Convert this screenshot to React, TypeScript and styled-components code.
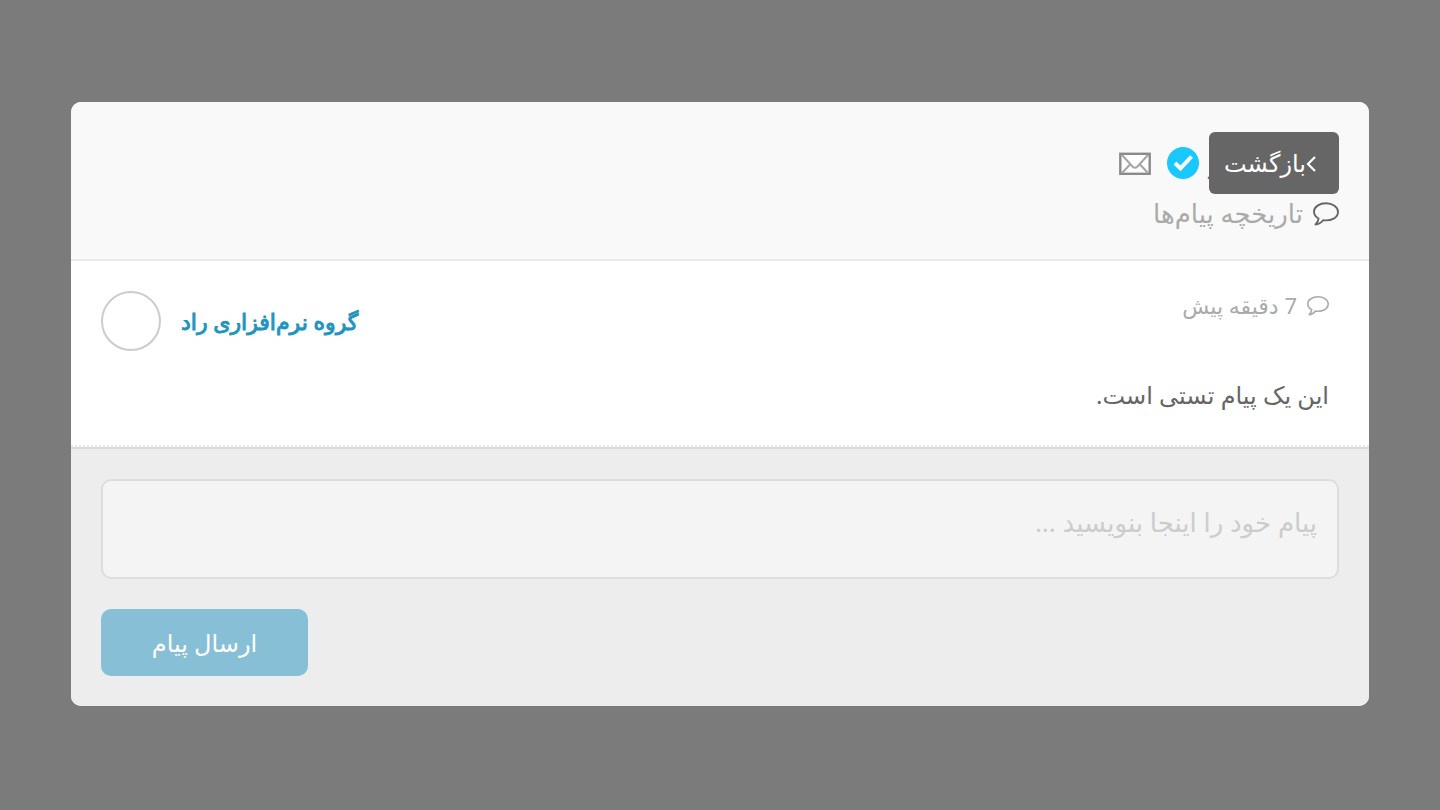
import React from 'react';
import styled, { createGlobalStyle } from 'styled-components';

const GlobalStyle = createGlobalStyle`
  *, *::before, *::after { box-sizing: border-box; }
  body {
    margin: 0;
    background: #7b7b7b;
    font-family: "Noto Sans", "Open Sans", "DejaVu Sans", sans-serif;
    font-size: 26px;
    color: #666;
  }
  button, textarea { font: inherit; }
  svg { flex-shrink: 0; }
`;

const Page = styled.div`
  min-height: 100vh;
  padding: 102px 71px 104px;
`;

const Card = styled.main`
  border-radius: 10px;
  overflow: hidden;
  background: #fff;
`;

const Header = styled.header`
  position: relative;
  padding: 30px 30px 27px;
  background: #f9f9f9;
  border-bottom: 2px solid #e9e9e9;
`;

const TitleRow = styled.div`
  display: flex;
  align-items: center;
  gap: 10px;
  height: 62px;
`;

const UserName = styled.span`
  width: 130px;
  text-align: left;
  line-height: 40px;
`;

const Badges = styled.span`
  display: flex;
  align-items: center;
  gap: 16px;
`;

const BackButton = styled.button`
  position: absolute;
  top: 30px;
  right: 30px;
  display: flex;
  align-items: center;
  justify-content: space-between;
  width: 130px;
  height: 62px;
  padding: 0 23px 0 15px;
  border: 0;
  border-radius: 6px;
  background: #666;
  color: #fff;
  font-size: 24px;
  line-height: 40px;
  white-space: nowrap;
  cursor: pointer;
`;

const Subtitle = styled.h1`
  display: flex;
  align-items: center;
  gap: 10px;
  margin: 0;
  font-size: 26px;
  font-weight: 400;
  line-height: 38px;
  color: #aaa;
  svg { color: #666; }
`;

const Message = styled.article`
  padding: 30px 40px 28px 30px;
  border-bottom: 2px dotted #e9e9e9;
`;

const MessageTop = styled.div`
  display: flex;
  justify-content: space-between;
  align-items: flex-start;
`;

const Time = styled.time`
  display: flex;
  align-items: center;
  gap: 10px;
  font-size: 22px;
  line-height: 28px;
  color: #aaa;
`;

const Author = styled.div`
  display: flex;
  align-items: center;
  gap: 20px;
  font-size: 22px;
  line-height: 60px;
  color: #1f94bf;
  -webkit-text-stroke: 1px currentColor;
`;

const Avatar = styled.span`
  width: 60px;
  height: 60px;
  border: 2px solid #ccc;
  border-radius: 50%;
`;

const Body = styled.p`
  margin: 22px 0 0;
  font-size: 24px;
  line-height: 44px;
`;

const Composer = styled.form`
  padding: 30px;
  border-top: 2px solid #dadada;
  background: #ededed;
`;

const Field = styled.textarea`
  display: block;
  width: 100%;
  height: 100px;
  padding: 22px 20px;
  border: 2px solid #ddd;
  border-radius: 10px;
  outline: 0;
  background: #f4f4f4;
  color: #666;
  line-height: 38px;
  resize: none;
  overflow: hidden;
  &::placeholder { color: #ccc; opacity: 1; }
`;

const Actions = styled.div`
  display: flex;
  justify-content: flex-end;
  margin-top: 30px;
`;

const SendButton = styled.button`
  width: 207px;
  height: 67px;
  padding: 0;
  border: 0;
  border-radius: 10px;
  background: #86bfd6;
  color: #fff;
  font-size: 24px;
  line-height: 40px;
  cursor: pointer;
`;

const CommentIcon = ({ size }: { size: number }) => (
  <svg width={size} height={size} viewBox="0 0 26 26" fill="none" stroke="currentColor" strokeWidth="1.9" strokeLinejoin="round" aria-hidden="true">
    <path d="M13 3.3C6.600 3.300 1 6.700 1 11.700C1 14.500 2.800 16.900 5.600 18.500C5.300 21 4.200 22.800 2.500 24.500C6 24.300 8.300 22.500 10 20.200C18.500 21.300 25 17.600 25 11.900C25 6.800 19.600 3.300 13 3.300Z" />
  </svg>
);

const VerifiedIcon = () => (
  <svg width="32" height="32" viewBox="0 0 32 32" fill="none" aria-hidden="true">
    <circle cx="16" cy="16" r="16" fill="#19c8ff" />
    <path d="M8 16L13.500 21.300L24.500 9.500" stroke="#f9f9f9" strokeWidth="4" />
  </svg>
);

const MailIcon = () => (
  <svg width="32" height="24" viewBox="0 0 32 24" fill="none" aria-hidden="true">
    <rect x="1.300" y="2.800" width="29.400" height="20" fill="#fff" stroke="#8a8a8a" strokeWidth="2.400" />
    <path d="M3 4L13.500 15.500Q16 18 18.500 15.500L29 4M3 22L11 13.500M29 22L21 13.500" stroke="#a5a5a5" strokeWidth="2" />
  </svg>
);

const ChevronIcon = () => (
  <svg width="10" height="18" viewBox="0 0 10 18" fill="none" stroke="currentColor" strokeWidth="2.200" aria-hidden="true">
    <path d="M9 3L2 10L9 17" />
  </svg>
);

export default function App() {
  return (
    <>
      <GlobalStyle />
      <Page dir="rtl" lang="fa">
        <Card>
          <Header>
            <TitleRow>
              <UserName>ر</UserName>
              <Badges>
                <VerifiedIcon />
                <MailIcon />
              </Badges>
            </TitleRow>
            <Subtitle>
              <CommentIcon size={26} />
              تاریخچه پیام‌ها
            </Subtitle>
            <BackButton type="button">
              <ChevronIcon />
              بازگشت
            </BackButton>
          </Header>
          <Message>
            <MessageTop>
              <Time>
                <CommentIcon size={22} />
                7 دقیقه پیش
              </Time>
              <Author>
                گروه نرم‌افزاری راد
                <Avatar />
              </Author>
            </MessageTop>
            <Body>این یک پیام تستی است.</Body>
          </Message>
          <Composer onSubmit={(event) => event.preventDefault()}>
            <Field aria-label="پیام" placeholder="پیام خود را اینجا بنویسید ..." />
            <Actions>
              <SendButton type="submit">ارسال پیام</SendButton>
            </Actions>
          </Composer>
        </Card>
      </Page>
    </>
  );
}
